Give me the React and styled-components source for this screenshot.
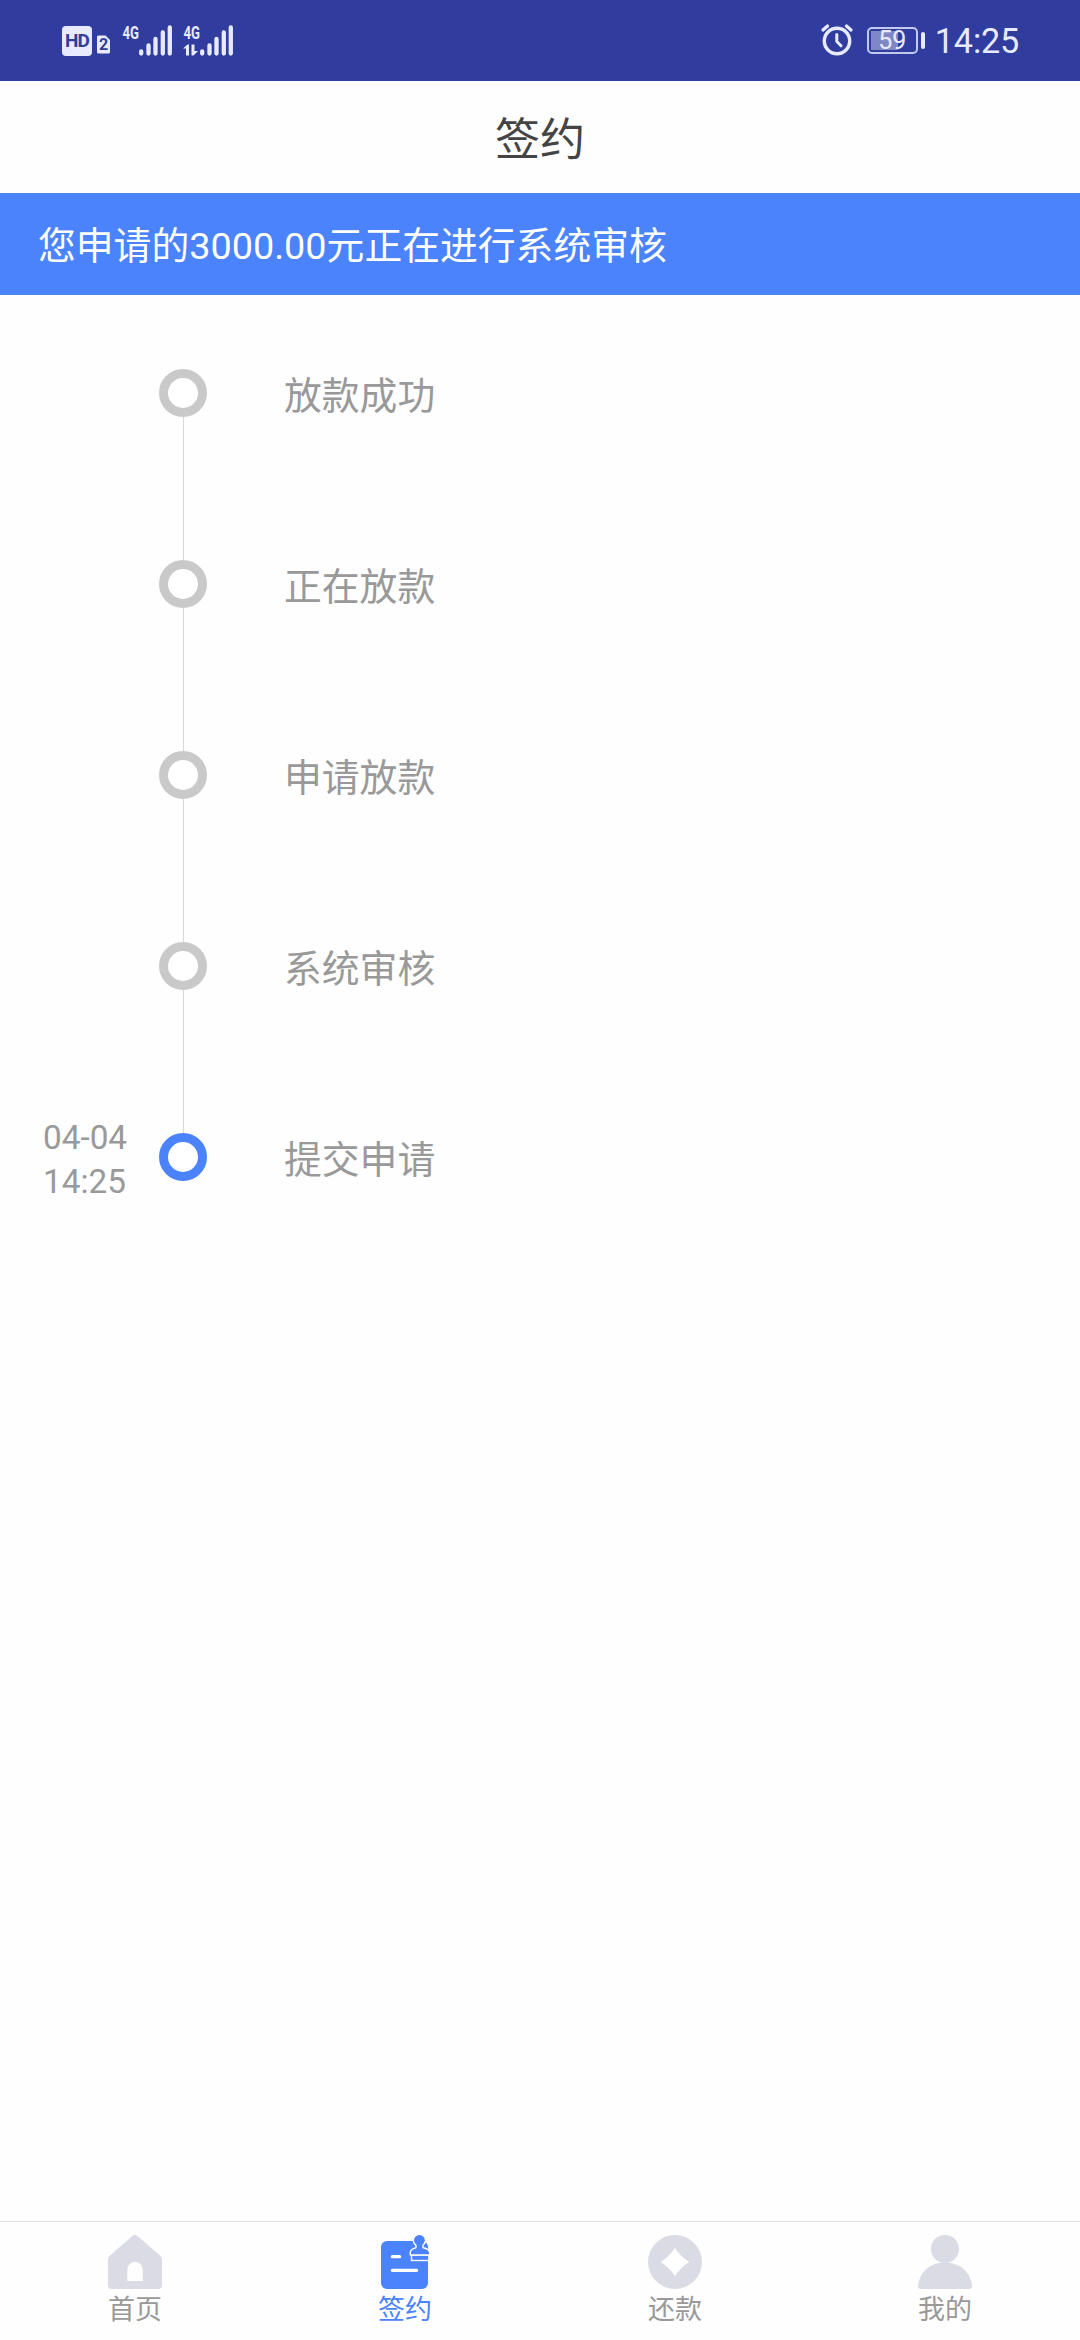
import React, { useState } from 'react';
import styled, { createGlobalStyle } from 'styled-components';

const steps = [
    { label: '放款成功' },
    { label: '正在放款' },
    { label: '申请放款' },
    { label: '系统审核' },
    { label: '提交申请', date: '04-04', time: '14:25', active: true },
];

const HomeIcon = () => (
    <TabIcon viewBox="0 0 54 54">
        <path fillRule="evenodd" d="M24.500 1Q27-1 29.500 1L52.500 21Q54 22.500 54 24.500V50Q54 54 50 54H4Q0 54 0 50V24.500Q0 22.500 1.500 21ZM19.300 46H34.700V34.500a7.700 7.700 0 0 0-15.400 0Z" />
    </TabIcon>
);

const stampHandle = 'M38.300 9.500Q39.500 12 38 13.500Q33 14.500 33 17.500V19.300H51V17.500Q50.500 14.500 45 13.500Q43.500 12 44.500 9.500Z';

const SignIcon = () => (
    <TabIcon viewBox="0 0 54 54">
        <rect x="3" y="6" width="47" height="48" rx="6" />
        <path d="M14.300 21.700H21.700M14.300 35.300H38.700" stroke="#fff" strokeWidth="3.200" strokeLinecap="round" />
        <g fill="#fff" stroke="#fff" strokeWidth="2.800">
            <circle cx="41.400" cy="5.300" r="5.400" />
            <path d={stampHandle} />
            <rect x="34.200" y="20.800" width="18" height="4" />
        </g>
        <circle cx="41.400" cy="5.300" r="5.400" />
        <path d={stampHandle} />
        <rect x="34.200" y="20.900" width="16" height="3.900" />
    </TabIcon>
);

const RepayIcon = () => (
    <TabIcon viewBox="0 0 54 54">
        <circle cx="27" cy="27" r="27" />
        <path fill="#fff" d="M27 12.800Q32.500 21.500 41.200 27Q32.500 32.500 27 41.200Q21.500 32.500 12.800 27Q21.500 21.500 27 12.800Z" />
    </TabIcon>
);

const MineIcon = () => (
    <TabIcon viewBox="0 0 54 54">
        <circle cx="27" cy="14" r="14" />
        <path d="M0 51C1.500 37 12 27.500 27 27.500S52.500 37 54 51Q54 54 51 54H3Q0 54 0 51Z" />
    </TabIcon>
);

const tabs = [
    { name: '首页', Icon: HomeIcon },
    { name: '签约', Icon: SignIcon },
    { name: '还款', Icon: RepayIcon },
    { name: '我的', Icon: MineIcon },
];

const Signal = ({ data }) => (
    <svg width="52" height="44" viewBox="0 -8 52 44">
        <SignalText x="0.500" y="14.500" textLength="16.500" lengthAdjust="spacingAndGlyphs">4G</SignalText>
        {data && (
            <path fill="#e8eaff" d="M0 24.500L4.500 20.500H6V31.500H3V24.500ZM8.500 20.500H11.500V27H15L10.500 31.500H8.500Z" />
        )}
        <path
            d="M19.200 27.500V29.500M26.500 21.500V29.500M33.500 15V29.500M40.800 8.500V29.500M47.800 3.500V29.500"
            stroke="#e8eaff"
            strokeWidth="4.300"
            strokeLinecap="round"
        />
    </svg>
);

const AlarmIcon = () => (
    <svg width="32" height="34" viewBox="0 0 32 34" fill="none" stroke="#e8eaff" strokeLinecap="round">
        <circle cx="16" cy="19" r="12.700" strokeWidth="3.400" />
        <path d="M15.800 12.500V19.500L20 23.800" strokeWidth="3" />
        <path d="M2 8L6.500 4M30 8L25.500 4" strokeWidth="3.200" />
    </svg>
);

const App = () => {
    const [current, setCurrent] = useState('签约');
    return (
        <Page>
            <GlobalStyle />
            <StatusBar>
                <StatusGroup>
                    <HdBadge>HD</HdBadge>
                    <svg width="26" height="34" viewBox="0 0 26 34">
                        <path fill="#e8eaff" d="M5 15Q5 13.500 6.500 13.500H13.500L18 18V30Q18 31.500 16.500 31.500H6.500Q5 31.500 5 30Z" />
                        <SimText x="11.500" y="28.300">2</SimText>
                    </svg>
                    <SignalSlot $gap="4px"><Signal /></SignalSlot>
                    <SignalSlot $gap="9px"><Signal data /></SignalSlot>
                </StatusGroup>
                <StatusGroup>
                    <AlarmIcon />
                    <Battery>59</Battery>
                    <BatteryCap />
                    <Clock>14:25</Clock>
                </StatusGroup>
            </StatusBar>
            <Header>签约</Header>
            <Banner>您申请的3000.00元正在进行系统审核</Banner>
            <Timeline>
                {steps.map((step) => (
                    <Step key={step.label}>
                        <StepTime>
                            {step.date}
                            <br />
                            {step.time}
                        </StepTime>
                        <Rail>
                            <Dot $active={step.active} />
                            {!step.active && <Line />}
                        </Rail>
                        <StepLabel>{step.label}</StepLabel>
                    </Step>
                ))}
            </Timeline>
            <TabBar>
                {tabs.map(({ name, Icon }) => (
                    <Tab key={name} $active={current === name} onClick={() => setCurrent(name)}>
                        <Icon />
                        <span>{name}</span>
                    </Tab>
                ))}
            </TabBar>
        </Page>
    )
}

const GlobalStyle = createGlobalStyle`
    * {
        box-sizing: border-box;
    }
    body {
        margin: 0;
        background: #fefefe;
        font-family: Roboto, 'Noto Sans CJK SC', sans-serif;
    }
`

const Page = styled.div`
    display: flex;
    flex-direction: column;
    width: 1080px;
    height: 2340px;
    background: #fefefe;
`

const StatusBar = styled.div`
    display: flex;
    justify-content: space-between;
    height: 81px;
    padding: 22px 61px 0 62px;
    background: #303d9f;
    color: #e8eaff;
`

const StatusGroup = styled.div`
    display: flex;
    align-items: flex-start;
    svg {
        display: block;
        flex: none;
    }
`

const HdBadge = styled.div`
    width: 30px;
    height: 30px;
    margin-top: 4px;
    border-radius: 4px;
    background: #e8eaff;
    color: #303d9f;
    font-size: 19px;
    font-weight: 700;
    line-height: 30px;
    letter-spacing: -0.8px;
    text-align: center;
`

const SignalSlot = styled.div`
    margin-top: -6px;
    margin-left: ${(props) => props.$gap};
`

const SignalText = styled.text`
    fill: #e8eaff;
    font-size: 18px;
    font-weight: 700;
`

const SimText = styled.text`
    fill: #303d9f;
    font-size: 16px;
    font-weight: 700;
    text-anchor: middle;
`

const Battery = styled.div`
    width: 51px;
    height: 27px;
    margin: 5px 0 0 14px;
    border: 2px solid #c3c8ee;
    border-radius: 5px;
    background: linear-gradient(#8087c6, #8087c6) 2px 2px / 27px 19px no-repeat;
    font-size: 25px;
    line-height: 24px;
    text-align: center;
`

const BatteryCap = styled.div`
    width: 4px;
    height: 17px;
    margin: 10px 10px 0 3px;
    border-radius: 2px;
    background: #e8eaff;
`

const Clock = styled.div`
    font-size: 34.2px;
    line-height: 38px;
    letter-spacing: -0.2px;
`

const Header = styled.header`
    height: 112px;
    padding-top: 4px;
    color: #444;
    font-size: 45px;
    line-height: 112px;
    text-align: center;
`

const Banner = styled.div`
    height: 102px;
    padding: 1px 0 0 38px;
    background: #4b83fc;
    color: #fff;
    font-size: 37.8px;
    line-height: 105px;
`

const Timeline = styled.div`
    flex: 1;
    padding-top: 74px;
`

const Step = styled.div`
    display: flex;
    height: 191px;
    color: #999;
`

const StepTime = styled.div`
    width: 159px;
    margin-top: -17px;
    padding-left: 43px;
    font-size: 33.3px;
    line-height: 44px;
`

const Rail = styled.div`
    display: flex;
    flex-direction: column;
    align-items: center;
    width: 48px;
`

const Dot = styled.div`
    width: 48px;
    height: 48px;
    border: 9px solid ${(props) => (props.$active ? '#4b83fc' : '#c9c9c9')};
    border-radius: 50%;
    background: #fff;
`

const Line = styled.div`
    flex: 1;
    width: 1px;
    background: #d8d8d8;
`

const StepLabel = styled.div`
    margin-left: 77px;
    padding-top: 2px;
    font-size: 37.8px;
    line-height: 50px;
`

const TabBar = styled.nav`
    display: flex;
    height: 119px;
    border-top: 1px solid #e0e0e0;
    background: #fefefe;
`

const Tab = styled.a`
    display: flex;
    flex: 1;
    flex-direction: column;
    align-items: center;
    padding-top: 13px;
    color: ${(props) => (props.$active ? '#4b83fc' : '#999')};
    font-size: 27px;
    line-height: 42px;
    cursor: pointer;
    svg {
        fill: ${(props) => (props.$active ? '#4b83fc' : '#dadbe4')};
    }
`

const TabIcon = styled.svg`
    display: block;
    width: 54px;
    height: 54px;
    overflow: visible;
`

export default App;
